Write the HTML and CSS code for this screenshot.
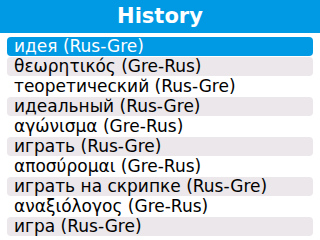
FILE: index.html
```html
<!DOCTYPE html>
<html>
<head>
<meta charset="utf-8">
<link rel="stylesheet" href="styles.css">
</head>
<body>
<div class="header">History</div>
<ul class="list">
<li class="item selected">идея (Rus-Gre)</li>
<li class="item alt">θεωρητικός (Gre-Rus)</li>
<li class="item">теоретический (Rus-Gre)</li>
<li class="item alt">идеальный (Rus-Gre)</li>
<li class="item">αγώνισμα (Gre-Rus)</li>
<li class="item alt">играть (Rus-Gre)</li>
<li class="item">αποσύρομαι (Gre-Rus)</li>
<li class="item alt">играть на скрипке (Rus-Gre)</li>
<li class="item">αναξιόλογος (Gre-Rus)</li>
<li class="item alt">игра (Rus-Gre)</li>
</ul>
</body>
</html>
```
FILE: styles.css
```css
html, body {
  margin: 0;
  padding: 0;
  background: #ffffff;
  width: 320px;
  height: 240px;
  overflow: hidden;
  font-family: "DejaVu Sans", sans-serif;
}
.header {
  height: 33px;
  background: #0099e3;
  color: #ffffff;
  font-weight: bold;
  font-size: 21px;
  line-height: 33px;
  text-align: center;
}
.list {
  list-style: none;
  margin: 4px 0 0 0;
  padding: 0 7px 0 7px;
  display: flex;
  flex-direction: column;
  gap: 1px;
}
.item {
  height: 19px;
  line-height: 19px;
  padding-left: 7px;
  font-size: 17px;
  color: #000000;
  border-radius: 4px;
  white-space: nowrap;
}
.item.alt {
  background: #ebe7eb;
}
.item.selected {
  background: #0099e3;
  color: #ffffff;
}
```
